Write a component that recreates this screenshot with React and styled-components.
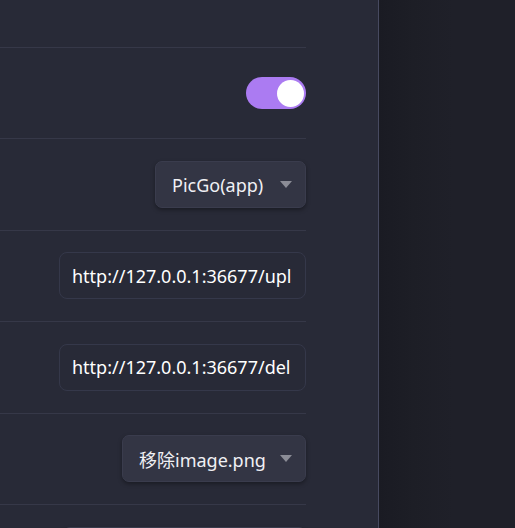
import React from "react"
import styled, { createGlobalStyle } from "styled-components"

const GlobalStyle = createGlobalStyle`
  html, body {
    margin: 0;
    padding: 0;
    height: 100%;
    overflow: hidden;
    background: #1e2029;
  }
  #root {
    height: 100%;
  }
`

const Layout = styled.div`
  display: flex;
  height: 528px;
  font-family: "Noto Sans", "Noto Sans CJK SC", sans-serif;
`

const Panel = styled.section`
  width: 378px;
  flex-shrink: 0;
  background: #282a37;
  border-right: 1px solid #474a60;
  overflow: hidden;
`

const Backdrop = styled.div`
  flex: 1;
  background: linear-gradient(90deg, #1a1b23 0%, #1d1e26 25%, #1f2029 55%, #1f2029 100%);
`

const List = styled.div`
  width: 306px;
  margin-top: -43.4px;
`

const Row = styled.div`
  height: 90.4px;
  display: flex;
  align-items: center;
  justify-content: flex-end;
  border-bottom: 1px solid #363848;
`

const Switch = styled.div`
  width: 60px;
  height: 32px;
  border-radius: 16px;
  background: #ab7bf2;
  display: flex;
  align-items: center;
  justify-content: ${props => (props.on ? "flex-end" : "flex-start")};
  padding: 0 2px;
  box-sizing: border-box;
`

const Knob = styled.span`
  width: 27px;
  height: 27px;
  border-radius: 50%;
  background: #ffffff;
`

const Select = styled.div`
  height: 47px;
  box-sizing: border-box;
  display: flex;
  align-items: center;
  gap: 12px;
  padding: 0 13px 0 16px;
  background: #333544;
  border: 1px solid #3a3c4d;
  border-radius: 7px;
  box-shadow: 0 2px 4px rgba(0, 0, 0, 0.35);
  color: #f0f0f4;
  font-size: 18px;
  width: ${props => props.width};
`

const Caret = styled.span`
  width: 0;
  height: 0;
  border-left: 6.5px solid transparent;
  border-right: 6.5px solid transparent;
  border-top: 7px solid #8b8c96;
  margin-left: auto;
`

const Input = styled.input`
  width: 247px;
  height: 47px;
  box-sizing: border-box;
  padding: 0 12px;
  background: transparent;
  border: 1px solid #35384a;
  border-radius: 8px;
  color: #ffffff;
  font-family: inherit;
  font-size: 18px;
  outline: none;
`

const rows = [
  { kind: "blank" },
  { kind: "switch" },
  { kind: "select", value: "PicGo(app)", width: "151px" },
  { kind: "input", value: "http://127.0.0.1:36677/upl" },
  { kind: "input", value: "http://127.0.0.1:36677/del" },
  { kind: "select", value: "移除image.png", width: "184px" },
  { kind: "select", value: "", width: "243px" },
]

export default function App() {
  return (
    <Layout>
      <GlobalStyle />
      <Panel>
        <List>
          {rows.map((r, i) => (
            <Row key={i}>
              {r.kind === "switch" && (
                <Switch on>
                  <Knob />
                </Switch>
              )}
              {r.kind === "select" && (
                <Select width={r.width}>
                  {r.value}
                  <Caret />
                </Select>
              )}
              {r.kind === "input" && <Input readOnly value={r.value} />}
            </Row>
          ))}
        </List>
      </Panel>
      <Backdrop />
    </Layout>
  )
}
